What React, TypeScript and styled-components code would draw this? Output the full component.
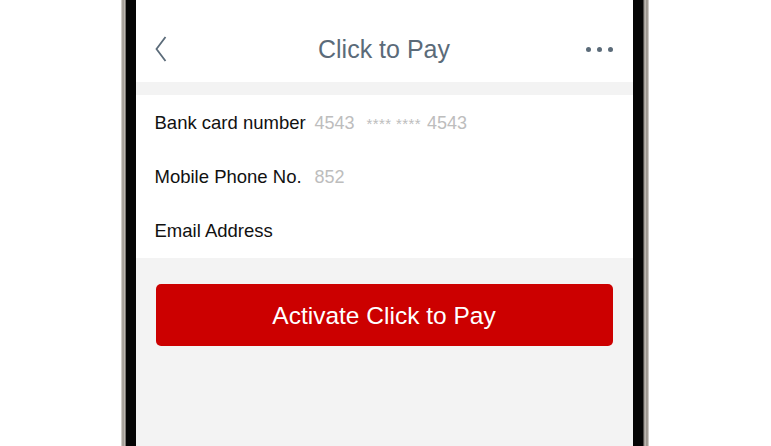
import * as React from 'react'
import styled, { createGlobalStyle } from 'styled-components'

const GlobalStyle = createGlobalStyle`
  html, body {
    margin: 0;
    padding: 0;
    background: #ffffff;
    font-family: "Liberation Sans", Arial, sans-serif;
  }
`

const Stage = styled.div`
  height: 446px;
  overflow: hidden;
  display: flex;
  justify-content: center;
  padding-right: 2px;
`
const Frame = styled.div`
  width: 528px;
  height: 446px;
  box-sizing: border-box;
  padding: 0 6px 0 5px;
  background: linear-gradient(
    90deg,
    #e4e1dc 0px,
    #9a948d 2px,
    #c9c4bd 4px,
    #2a2826 5px,
    #2a2826 calc(100% - 6px),
    #c9c4bd calc(100% - 4px),
    #8d8780 calc(100% - 2px),
    #e4e1dc 100%
  );
`
const Bezel = styled.div`
  height: 100%;
  box-sizing: border-box;
  border-left: 10px solid #050505;
  border-right: 10px solid #050505;
`
const Screen = styled.div`
  height: 100%;
  background: #f3f3f3;
  display: flex;
  flex-direction: column;
`
const NavBar = styled.div`
  height: 82px;
  background: #ffffff;
  display: grid;
  grid-template-columns: 60px 1fr 60px;
  align-items: center;
  padding-top: 16px;
  box-sizing: border-box;
`
const BackButton = styled.div`
  display: flex;
  align-items: center;
  padding-left: 18px;
`
const Title = styled.div`
  text-align: center;
  font-size: 25px;
  color: #5b6b79;
`
const More = styled.div`
  display: flex;
  justify-content: flex-end;
  gap: 6px;
  padding-right: 20px;
`
const Dot = styled.span`
  width: 5px;
  height: 5px;
  border-radius: 50%;
  background: #5b6b79;
`
const Card = styled.div`
  margin-top: 13px;
  background: #ffffff;
  padding: 1px 19px 0;
`
const Row = styled.div`
  height: 54px;
  display: grid;
  grid-template-columns: 160px 1fr;
  align-items: center;
  font-size: 18.5px;
`
const Label = styled.span`
  color: #111111;
`
const Value = styled.span`
  color: #bdbdbd;
  font-size: 18px;
  display: flex;
  align-items: baseline;
`
const Mask = styled.span`
  font-size: 15px;
  margin-left: 12px;
  margin-right: 6px;
  letter-spacing: 0.4px;
`
const ActivateButton = styled.button`
  margin: 26px 20px 0;
  height: 62px;
  border: none;
  border-radius: 5px;
  background: #cc0000;
  color: #ffffff;
  font-family: "Liberation Sans", Arial, sans-serif;
  font-size: 24.5px;
  padding-top: 3px;
  cursor: pointer;
`

const App = () => {
  return (
    <>
      <GlobalStyle />
      <Stage>
        <Frame>
          <Bezel>
            <Screen>
              <NavBar>
                <BackButton>
                  <svg width="14" height="28" viewBox="0 0 14 28" fill="none">
                    <path d="M11.5 2 L2.5 14 L11.5 26" stroke="#5b6b79" strokeWidth="1.8" />
                  </svg>
                </BackButton>
                <Title>Click to Pay</Title>
                <More>
                  <Dot />
                  <Dot />
                  <Dot />
                </More>
              </NavBar>
              <Card>
                <Row>
                  <Label>Bank card number</Label>
                  <Value>
                    4543<Mask>**** ****</Mask>4543
                  </Value>
                </Row>
                <Row>
                  <Label>Mobile Phone No.</Label>
                  <Value>852</Value>
                </Row>
                <Row>
                  <Label>Email Address</Label>
                  <Value />
                </Row>
              </Card>
              <ActivateButton>Activate Click to Pay</ActivateButton>
            </Screen>
          </Bezel>
        </Frame>
      </Stage>
    </>
  )
}

export default App
